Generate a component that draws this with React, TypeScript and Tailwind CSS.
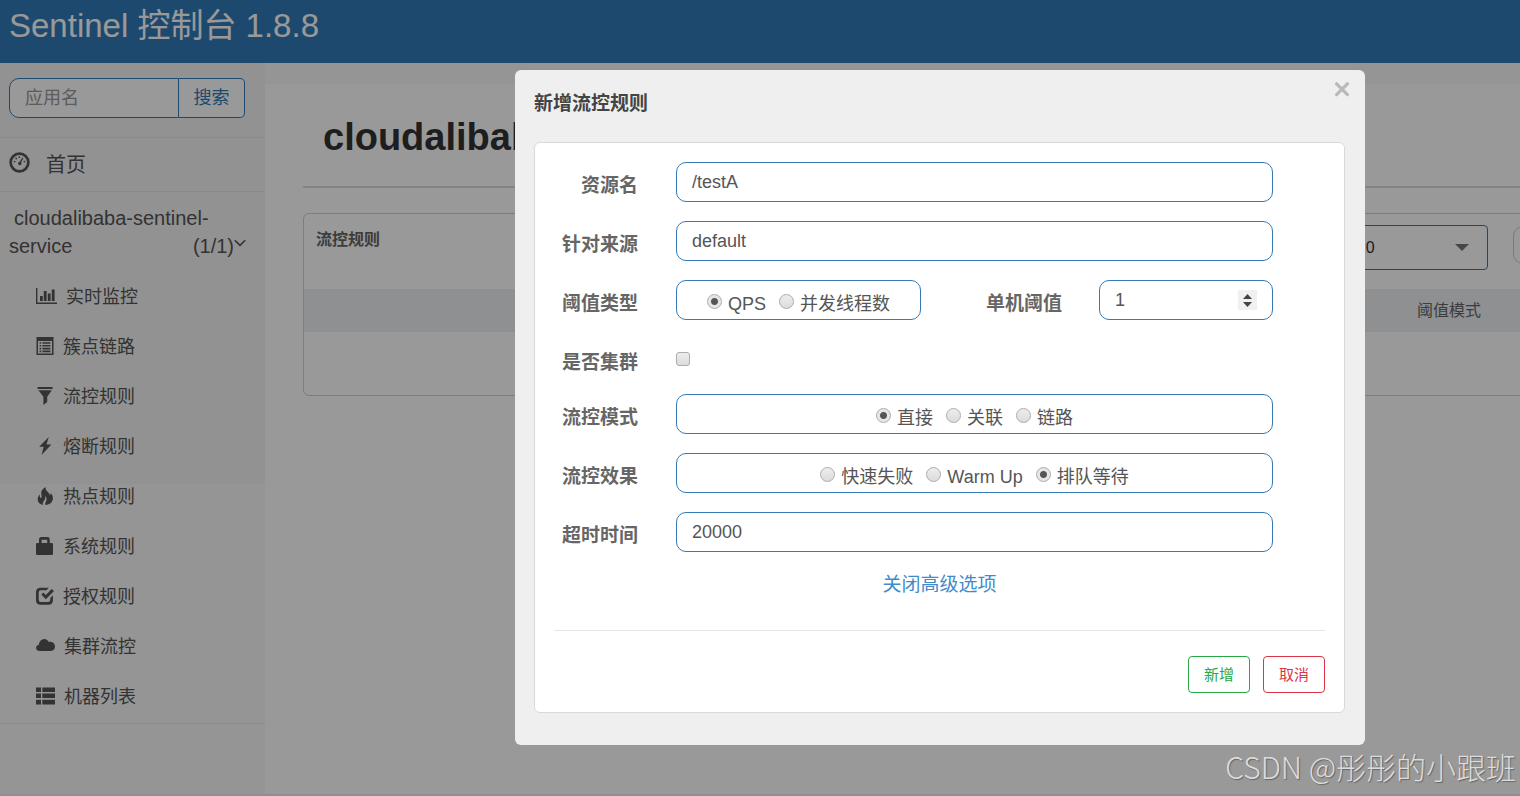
import React, { useState } from "react";

type IconProps = { children: React.ReactNode; box: string; className: string };

function Glyph({ children, box, className }: IconProps) {
  return (
    <svg viewBox={box} className={className} fill="currentColor" aria-hidden="true">
      {children}
    </svg>
  );
}

const icons = {
  dashboard: (
    <Glyph box="0 0 21 21" className="h-[21px] w-[21px] shrink-0">
      <path fillRule="evenodd" d="M10.5 0.3a10.2 10.2 0 1 0 0 20.4a10.2 10.2 0 1 0 0-20.4zM10.5 3a7.5 7.5 0 1 1 0 15a7.5 7.5 0 1 1 0-15z" />
      <circle cx="5.6" cy="9.6" r="0.9" />
      <circle cx="7.2" cy="6.5" r="0.9" />
      <circle cx="10.4" cy="5.1" r="0.9" />
      <circle cx="15.4" cy="9.6" r="0.9" />
      <path d="M13.4 5.6l1 .6-2.3 4.1a1.7 1.7 0 1 1-1.3-.6z" />
    </Glyph>
  ),
  chart: (
    <Glyph box="0 0 21 16" className="h-[16px] w-[21px] shrink-0">
      <path d="M0 0h1.4v14.4H21V16H0zM4 8h2.8v5H4zM7.800 3h2.800v10H7.800zM11.800 5.500h2.800v7.500h-2.800zM15.800 1.500h2.800V13h-2.800z" />
    </Glyph>
  ),
  listAlt: (
    <Glyph box="0 0 18 18" className="h-[18px] w-[18px] shrink-0">
      <path fillRule="evenodd" d="M.5 0h17v18H.5zM2 4v12.6h14V4z" />
      <path d="M3.6 5.2h1.6v1.6H3.6zM6.4 5.2h8v1.6h-8zM3.6 8h1.6v1.6H3.6zM6.4 8h8v1.6h-8zM3.6 10.8h1.6v1.6H3.6zM6.4 10.8h8v1.6h-8zM3.6 13.6h1.6v1.6H3.6zM6.4 13.6h8v1.6h-8z" />
    </Glyph>
  ),
  filter: (
    <Glyph box="0 0 18 18" className="h-[18px] w-[18px] shrink-0">
      <path d="M1.6 0h15v2h-15zM2.400 3.200h13.400L11.200 9.800v5.200L7.400 18V9.800z" />
    </Glyph>
  ),
  flash: (
    <Glyph box="0 0 18 18" className="h-[18px] w-[18px] shrink-0">
      <path d="M12.800 0L3.200 9.800h4.500L5.500 18 15.400 7.600h-4.900z" />
    </Glyph>
  ),
  fire: (
    <Glyph box="0 0 18 18" className="h-[18px] w-[18px] shrink-0">
      <path d="M9.800 0C6.800 1.200 5 3.800 5.200 6.600c.1 1.500.6 2.700.4 3.700-.4 1.200-1.600.7-1.700-.5-.1-1 0-1.700.1-2.400C2.400 8.700 1.500 10.700 1.700 12.700 2 15.500 4 17.400 7 18c-.6-1.600-.3-2.900.8-4.100 1.400-1.600 1.700-3.300 1.300-5.200l1.300 2c.5 1.600 0 2.800-.6 4-.5 1.100-.7 2.100-.3 3.300 4.400-.4 7.400-3 7.400-6.800 0-2.300-.9-3.900-2.400-5.300.1 1.100 0 2-.6 2.500-.4-1.400-1.200-2.800-2.500-3.900C9.900 3.200 9.200 1.600 9.800 0z" />
    </Glyph>
  ),
  lock: (
    <Glyph box="0 0 18 18" className="h-[18px] w-[18px] shrink-0">
      <path fillRule="evenodd" d="M3 6V2.400Q3 0 5.400 0h6Q13.800 0 13.800 2.400V6h2q1.200 0 1.200 1.200v9.600Q17 18 15.800 18H1.200Q0 18 0 16.800V7.200Q0 6 1.200 6zM5.600 6h5.600V2.800H5.600z" />
    </Glyph>
  ),
  check: (
    <Glyph box="0 0 18 18" className="h-[18px] w-[18px] shrink-0">
      <path d="M4.600.7h8.200l-2.300 2.500H5Q2.700 3.200 2.700 5.500v7.300q0 2.300 2.300 2.300h7q2.300 0 2.300-2.300v-1.900l2.600-2.600v5q0 4.400-4.400 4.400H4.600Q0 17.700 0 13.300V5.200Q0 .7 4.600.7z" />
      <path d="M5.300 7.600l2-2 2.500 2.500L15.700 1.900 18 4.100 9.800 12.300z" />
    </Glyph>
  ),
  cloud: (
    <Glyph box="0 0 19 18" className="h-[18px] w-[19px] shrink-0">
      <path d="M3.800 14Q0 13.800 0 10.800 0 8.400 2.700 7.800C3.400 4.200 5.400 2 8.200 2c2 0 3.600 1 4.500 2.900 3.400-.6 6.300 1.400 6.300 4.700 0 2.700-1.700 4.400-4.300 4.400z" />
    </Glyph>
  ),
  thList: (
    <Glyph box="0 0 19 18" className="h-[18px] w-[19px] shrink-0">
      <path d="M0 .5h5v4.600H0zM6.300.5H19v4.600H6.300zM0 6.500h5v4.600H0zM6.300 6.500H19v4.600H6.300zM0 12.700h5v4.800H0zM6.300 12.700H19v4.800H6.300z" />
    </Glyph>
  ),
};

const menu = [
  { label: "实时监控", icon: icons.chart },
  { label: "簇点链路", icon: icons.listAlt },
  { label: "流控规则", icon: icons.filter },
  { label: "熔断规则", icon: icons.flash },
  { label: "热点规则", icon: icons.fire },
  { label: "系统规则", icon: icons.lock },
  { label: "授权规则", icon: icons.check },
  { label: "集群流控", icon: icons.cloud },
  { label: "机器列表", icon: icons.thList },
];

const fieldBox = "h-10 min-w-0 rounded-[10px] border border-[#337ab7] bg-white text-[18px] text-[#555]";
const labelText = "w-[84px] shrink-0 pt-2 text-right text-[19px] font-bold leading-8 text-[#666]";

function Radios({ name, options, initial, className }: { name: string; options: string[]; initial: string; className: string }) {
  const [value, setValue] = useState(initial);
  return (
    <div role="radiogroup" aria-label={name} className={`${fieldBox} flex items-center justify-center gap-[13px] pt-[7px] ${className}`}>
      {options.map((o) => (
        <label key={o} className="flex items-center gap-[6px] whitespace-nowrap leading-6">
          <input
            type="radio"
            name={name}
            checked={value === o}
            onChange={() => setValue(o)}
            className="mb-1 h-[15px] w-[15px] appearance-none rounded-full border border-[#acacac] bg-[linear-gradient(#ededed,#dcdcdc)] checked:bg-[radial-gradient(circle,#555_3px,#e6e6e6_4px)]"
          />
          {o}
        </label>
      ))}
    </div>
  );
}

function TextRow({ id, label, initial }: { id: string; label: string; initial: string }) {
  return (
    <div className="flex gap-[38px]">
      <label htmlFor={id} className={labelText}>{label}</label>
      <input id={id} defaultValue={initial} className={`${fieldBox} flex-1 px-[15px] outline-none`} />
    </div>
  );
}

function Sidebar() {
  return (
    <nav className="w-[265px] shrink-0 bg-[linear-gradient(#f4f4f4_421px,#f8f8f8_421px)] text-[#555]">
      <form className="flex h-[74px] pl-[9px] pt-[15px]" onSubmit={(e) => e.preventDefault()}>
        <input
          aria-label="应用名"
          placeholder="应用名"
          className="h-10 w-[170px] rounded-l-[10px] border border-[#337ab7] bg-white px-[15px] text-[18px] outline-none placeholder:text-[#999]"
        />
        <button className="h-10 w-[66px] rounded-r-[5px] border border-l-0 border-[#337ab7] bg-white text-[18px] text-[#337ab7]">搜索</button>
      </form>
      <a href="#home" className="flex h-[55px] items-center gap-4 border-y border-[#e7e7e7] pl-[9px] text-[20px]">
        <span className="pb-1">{icons.dashboard}</span>
        首页
      </a>
      <a href="#app" className="block h-[80px] pl-[9px] pr-[19px] pt-3 text-[20px] leading-7">
        <span className="block pl-[5px]">cloudalibaba-sentinel-</span>
        <span className="flex justify-between">
          <span>service</span>
          <span className="flex items-center">
            (1/1)
            <svg viewBox="0 0 12 12" className="mb-1 h-3 w-3" fill="none" stroke="currentColor" strokeWidth="1.6" aria-hidden="true">
              <path d="M.8 2.200L6 7.400l5.200-5.200" />
            </svg>
          </span>
        </span>
      </a>
      <ul className="border-b border-[#e7e7e7] pb-px">
        {menu.map((m) => (
          <li key={m.label}>
            <a href={`#${m.label}`} className="flex h-[50px] items-center gap-[9px] pl-9 text-[18px]">
              <span className="pb-[2px]">{m.icon}</span>
              {m.label}
            </a>
          </li>
        ))}
      </ul>
    </nav>
  );
}

function RulesPage() {
  return (
    <main className="min-w-0 flex-1 overflow-hidden bg-[#f8f8f8] pt-[21px]">
      <div className="h-full bg-white pl-[38px]">
        <div className="-mr-[200px]">
          <h1 className="h-[102px] pl-5 pt-[29px] text-[38px] font-bold leading-[48px] text-[#333]">cloudalibaba-sentinel-service</h1>
          <hr className="border-t-2 border-[#ddd]" />
          <section className="mt-[25px] h-[183px] rounded-[6px] border border-[#d0d0d0]">
            <div className="flex h-[75px] items-start pl-3 pr-[46px] pt-[11px]">
              <h2 className="flex-1 text-[16px] font-bold leading-[30px] text-[#666]">流控规则</h2>
              <div className="relative">
                <select aria-label="端口" className="h-[45px] w-[162px] appearance-none rounded-[4px] border border-[#337ab7] bg-white pl-3 text-[16px] text-[#333]">
                  <option>8720</option>
                </select>
                <svg viewBox="0 0 14 7" className="pointer-events-none absolute right-[19px] top-[19px] h-[7px] w-[14px]" fill="#777" aria-hidden="true">
                  <path d="M0 0h14L7 7z" />
                </svg>
              </div>
              <input aria-label="关键字" className="ml-[25px] mt-px h-[38px] w-[160px] rounded-[10px] border border-[#ccc]" />
            </div>
            <table className="w-full table-fixed text-[16px]">
              <thead>
                <tr className="h-[43px] bg-[#edf0f4] text-[#666]">
                  <td />
                  <th scope="col" className="w-[310px] pl-2 text-left font-normal">阈值模式</th>
                </tr>
              </thead>
            </table>
          </section>
        </div>
      </div>
    </main>
  );
}

function RuleDialog() {
  return (
    <section role="dialog" aria-labelledby="dialog-title" className="h-fit w-full max-w-[850px] rounded-[6px] bg-[#efefef] pb-8 pl-[19px] pr-5 text-[#555]">
      <header className="flex h-[72px] items-start justify-between">
        <h2 id="dialog-title" className="pt-5 text-[19px] font-bold leading-7 text-[#444]">新增流控规则</h2>
        <button aria-label="关闭" className="-mr-[5px] mt-3 text-[#b9b9b9]">
          <svg viewBox="0 0 16 16" className="h-4 w-4" stroke="currentColor" strokeWidth="3.200" strokeLinecap="round" aria-hidden="true">
            <path d="M2.600 1.800l10.800 10.800M13.400 1.800L2.600 12.600" />
          </svg>
        </button>
      </header>
      <form className="rounded-[6px] border border-[#d9d9d9] bg-white p-[19px]" onSubmit={(e) => e.preventDefault()}>
        <div className="flex flex-col gap-[19px] pr-[52px]">
          <TextRow id="resource" label="资源名" initial="/testA" />
          <TextRow id="source" label="针对来源" initial="default" />
          <div className="flex gap-[38px]">
            <span className={labelText}>阈值类型</span>
            <Radios name="阈值类型" options={["QPS", "并发线程数"]} initial="QPS" className="flex-1" />
            <div className="flex gap-[37px] pl-[19px]">
              <label htmlFor="count" className={labelText}>单机阈值</label>
              <div className={`${fieldBox} flex w-[174px] items-center px-[15px]`}>
                <input
                  id="count"
                  type="number"
                  defaultValue={1}
                  className="h-full min-w-0 flex-1 bg-transparent outline-none [&::-webkit-inner-spin-button]:appearance-none"
                />
                <span className="flex h-5 w-[19px] items-center justify-center bg-[#f0f0f0] text-[#444]">
                  <svg viewBox="0 0 9 13" className="h-[13px] w-[9px]" fill="currentColor" aria-hidden="true">
                    <path d="M4.500 0L9 5H0zM0 8h9l-4.500 5z" />
                  </svg>
                </span>
              </div>
            </div>
          </div>
          <div className="flex h-9 items-start gap-[38px]">
            <label htmlFor="cluster" className={labelText}>是否集群</label>
            <input
              id="cluster"
              type="checkbox"
              className="mt-[13px] h-[14px] w-[14px] appearance-none rounded-[3px] border border-[#acacac] bg-[linear-gradient(#ededed,#dcdcdc)] checked:bg-[#337ab7]"
            />
          </div>
          <div className="flex gap-[38px]">
            <span className={labelText}>流控模式</span>
            <Radios name="流控模式" options={["直接", "关联", "链路"]} initial="直接" className="flex-1" />
          </div>
          <div className="flex gap-[38px]">
            <span className={labelText}>流控效果</span>
            <Radios name="流控效果" options={["快速失败", "Warm Up", "排队等待"]} initial="排队等待" className="flex-1" />
          </div>
          <TextRow id="timeout" label="超时时间" initial="20000" />
        </div>
        <div className="flex h-[78px] justify-center pt-[19px]">
          <a href="#advanced" className="h-7 text-[19px] leading-7 text-[#428bca]">关闭高级选项</a>
        </div>
        <hr className="border-[#e5e5e5]" />
        <div className="flex justify-end gap-[13px] pt-[25px]">
          <button className="h-[37px] w-[62px] rounded-[4px] border border-[#28a745] bg-white pt-[2px] text-[15px] text-[#28a745]">新增</button>
          <button type="button" className="h-[37px] w-[62px] rounded-[4px] border border-[#dc3545] bg-white pt-[2px] text-[15px] text-[#dc3545]">取消</button>
        </div>
      </form>
    </section>
  );
}

export default function App() {
  return (
    <div className="relative flex min-h-screen flex-col overflow-hidden bg-white font-['Liberation_Sans','Noto_Sans_CJK_SC',sans-serif]">
      <header className="h-[63px] bg-[#337ab7] pl-[9px] text-[33px] leading-[52px] text-white">Sentinel 控制台 1.8.8</header>
      <div className="flex flex-1 border-b-2 border-[#eee]">
        <Sidebar />
        <RulesPage />
      </div>
      <div className="absolute inset-0 bg-black/40 pl-[515px] pt-[70px]">
        <RuleDialog />
      </div>
      <p className="absolute bottom-2 right-1 font-['Noto_Sans_CJK_SC',sans-serif] text-[30px] font-light leading-[44px] text-[#dcdcdc] [text-shadow:1px_1px_1px_#666]">
        CSDN @彤彤的小跟班
      </p>
    </div>
  );
}
